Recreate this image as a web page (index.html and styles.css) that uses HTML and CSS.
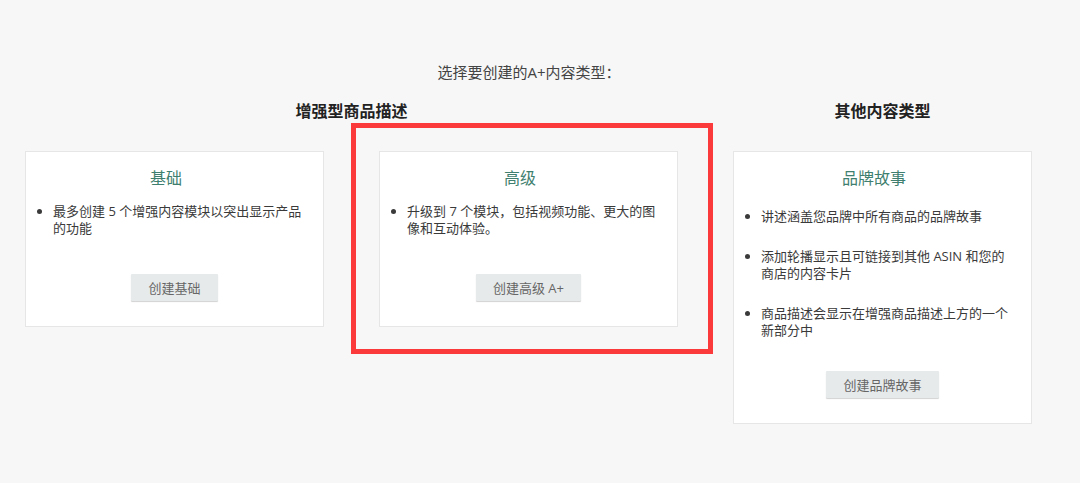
FILE: index.html
```html
<!DOCTYPE html>
<html lang="zh">
<head>
    <meta charset="utf-8">
    <title>A+ 内容类型</title>
    <link rel="stylesheet" href="styles.css">
</head>
<body>
    <div class="page">
        <h1 class="page-title">选择要创建的A+内容类型：</h1>

        <div class="groups">
            <!-- 增强型商品描述 -->
            <section class="group group-wide">
                <h2 class="group-title">增强型商品描述</h2>
                <div class="group-cards">
                    <div class="card">
                        <h3 class="card-title">基础</h3>
                        <ul class="card-list">
                            <li>最多创建 5 个增强内容模块以突出显示产品的功能</li>
                        </ul>
                        <div class="card-action">
                            <button class="btn">创建基础</button>
                        </div>
                    </div>

                    <div class="card">
                        <div class="highlight"></div>
                        <h3 class="card-title">高级</h3>
                        <ul class="card-list">
                            <li>升级到 7 个模块，包括视频功能、更大的图像和互动体验。</li>
                        </ul>
                        <div class="card-action">
                            <button class="btn">创建高级 A+</button>
                        </div>
                    </div>
                </div>
            </section>

            <!-- 其他内容类型 -->
            <section class="group">
                <h2 class="group-title">其他内容类型</h2>
                <div class="group-cards">
                    <div class="card">
                        <h3 class="card-title">品牌故事</h3>
                        <ul class="card-list card-list-story">
                            <li>讲述涵盖您品牌中所有商品的品牌故事</li>
                            <li>添加轮播显示且可链接到其他 ASIN 和您的商店的内容卡片</li>
                            <li>商品描述会显示在增强商品描述上方的一个新部分中</li>
                        </ul>
                        <div class="card-action card-action-story">
                            <button class="btn">创建品牌故事</button>
                        </div>
                    </div>
                </div>
            </section>
        </div>
    </div>
</body>
</html>
```

FILE: styles.css
```css
body {
    margin: 0;
    background-color: #f7f7f7;
    font-family: "Open Sans", "Noto Sans CJK SC", sans-serif;
    color: #333;
}

.page {
    width: 1008px;
    margin-left: 25px;
    padding-top: 62px;
}

.page-title {
    margin: 0;
    font-size: 15px;
    line-height: 20px;
    font-weight: normal;
    color: #444;
    text-align: center;
}

.groups {
    display: flex;
    gap: 55px;
    margin-top: 18px;
    align-items: flex-start;
}

.group {
    width: 299px;
}
.group-wide {
    width: 653px;
}

.group-title {
    margin: 0 0 29px;
    font-size: 16px;
    line-height: 22px;
    font-weight: bold;
    color: #222;
    text-align: center;
}

.group-cards {
    display: flex;
    gap: 55px;
    align-items: flex-start;
}

.card {
    position: relative;
    width: 299px;
    box-sizing: border-box;
    background-color: #fff;
    border: 1px solid #e6e6e6;
    padding: 15px 17px 25px 0;
}

.card-title {
    margin: 0;
    font-size: 16px;
    line-height: 22px;
    font-weight: normal;
    color: #3f7f6f;
    text-align: center;
}

.card-list {
    margin: 14px 0 0;
    padding-left: 27px;
    font-size: 13px;
    line-height: 17px;
    color: #3a3a3a;
}
.card-list li + li {
    margin-top: 23px;
}
.card-list-story {
    margin-top: 19px;
}

.card-action {
    margin-top: 37px;
    padding-left: 17px;
    text-align: center;
}
.card-action-story {
    margin-top: 32px;
}

.btn {
    height: 27px;
    padding: 0 17px;
    border: none;
    border-radius: 1px;
    background-color: #e6eaeb;
    box-shadow: 0 1px 1px rgba(0, 0, 0, 0.18);
    font-family: inherit;
    font-size: 13px;
    color: #666;
}

/* red box drawn over the selected card */
.highlight {
    position: absolute;
    left: -29px;
    top: -29px;
    right: -36px;
    bottom: -28px;
    border: 5px solid #fb3b3b;
    pointer-events: none;
}
```
